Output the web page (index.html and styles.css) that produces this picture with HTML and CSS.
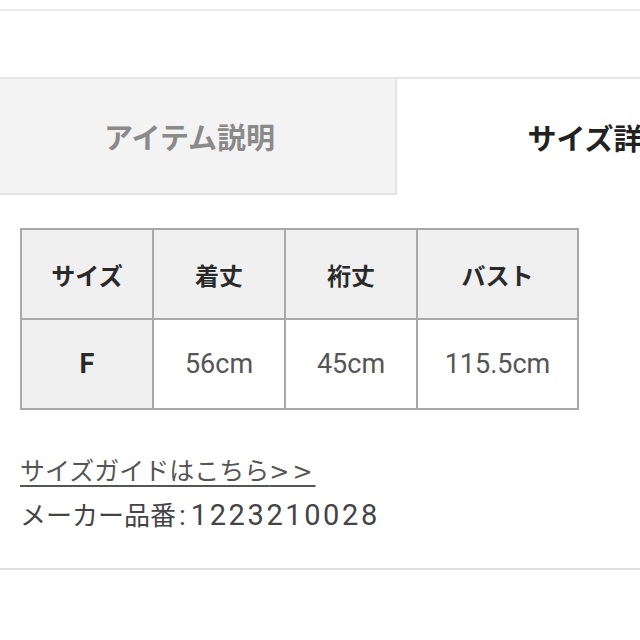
FILE: index.html
```html
<!DOCTYPE html>
<html lang="ja">
<head>
<meta charset="utf-8">
<link rel="stylesheet" href="styles.css">
</head>
<body>
<div class="page">
  <div class="topline"></div>
  <div class="tabs">
    <div class="tab inactive">アイテム説明</div>
    <div class="tab active">サイズ詳細</div>
  </div>
  <div class="content">
    <table class="sizes">
      <colgroup>
        <col class="c1"><col class="c2"><col class="c3"><col class="c4">
      </colgroup>
      <tr class="head">
        <th>サイズ</th><th>着丈</th><th>裄丈</th><th>バスト</th>
      </tr>
      <tr>
        <th class="num">F</th><td class="num">56cm</td><td class="num">45cm</td><td class="num">115.5cm</td>
      </tr>
    </table>
    <a class="guide" href="#">サイズガイドはこちら<span class="arr">&gt;&gt;</span></a>
    <p class="code">メーカー品番<span class="colon">:</span><span class="digits">1223210028</span></p>
  </div>
  <div class="bottomline"></div>
</div>
</body>
</html>
```
FILE: styles.css
```css
html, body {
  margin: 0;
  padding: 0;
  background: #fff;
  overflow: hidden;
}
.page {
  width: 640px;
  font-family: "Noto Sans CJK JP", "Noto Sans", sans-serif;
  color: #333;
  padding-top: 9px;
}
.topline {
  height: 2px;
  background: #e8e8e8;
}
.tabs {
  margin-top: 66px;
  display: grid;
  grid-template-columns: 397px 397px;
  width: 794px;
  border-top: 2px solid #e6e6e6;
}
.tab {
  height: 116px;
  display: flex;
  align-items: center;
  justify-content: center;
  font-size: 29px;
  font-weight: 700;
  box-sizing: border-box;
}
.tab.inactive {
  background: #f3f3f3;
  color: #8a8a8a;
  border-right: 2px solid #e4e4e4;
  border-bottom: 2px solid #e4e4e4;
  padding-right: 16px;
}
.tab.active {
  color: #222;
  padding-left: 8px;
}
.content {
  padding: 33px 0 0 20px;
}
.sizes {
  border-collapse: collapse;
  table-layout: fixed;
  width: 557px;
}
.sizes .c1, .sizes .c2, .sizes .c3 { width: 132px; }
.sizes .c4 { width: 161px; }
.sizes th, .sizes td {
  border: 2px solid #a8a8a8;
  height: 88px;
  padding: 0;
  text-align: center;
  font-size: 24px;
}
.sizes th {
  background: #f0f0f0;
  font-weight: 700;
  color: #2a2a2a;
}
.sizes td {
  background: #fff;
  color: #555;
  font-weight: 400;
}
.sizes .num {
  font-family: Roboto, "Liberation Sans", sans-serif;
  font-size: 27px;
}
.sizes th.num {
  font-weight: 700;
}
.guide {
  display: inline-block;
  margin-top: 43px;
  font-size: 25px;
  color: #555;
  text-decoration: underline;
  text-underline-offset: 5px;
  text-decoration-thickness: 2px;
  line-height: 32px;
}
.arr {
  font-family: "DejaVu Sans", sans-serif;
  font-size: 24px;
  letter-spacing: 3px;
}
.code {
  margin: 9px 0 0;
  font-size: 26px;
  color: #444;
  line-height: 34px;
}
.colon {
  font-family: Roboto, sans-serif;
  font-size: 28px;
  padding: 0 5px 0 3px;
}
.digits {
  font-family: Roboto, "Liberation Sans", sans-serif;
  font-size: 29px;
  letter-spacing: 2.6px;
}
.bottomline {
  margin-top: 35px;
  height: 2px;
  background: #e0e0e0;
}
```
